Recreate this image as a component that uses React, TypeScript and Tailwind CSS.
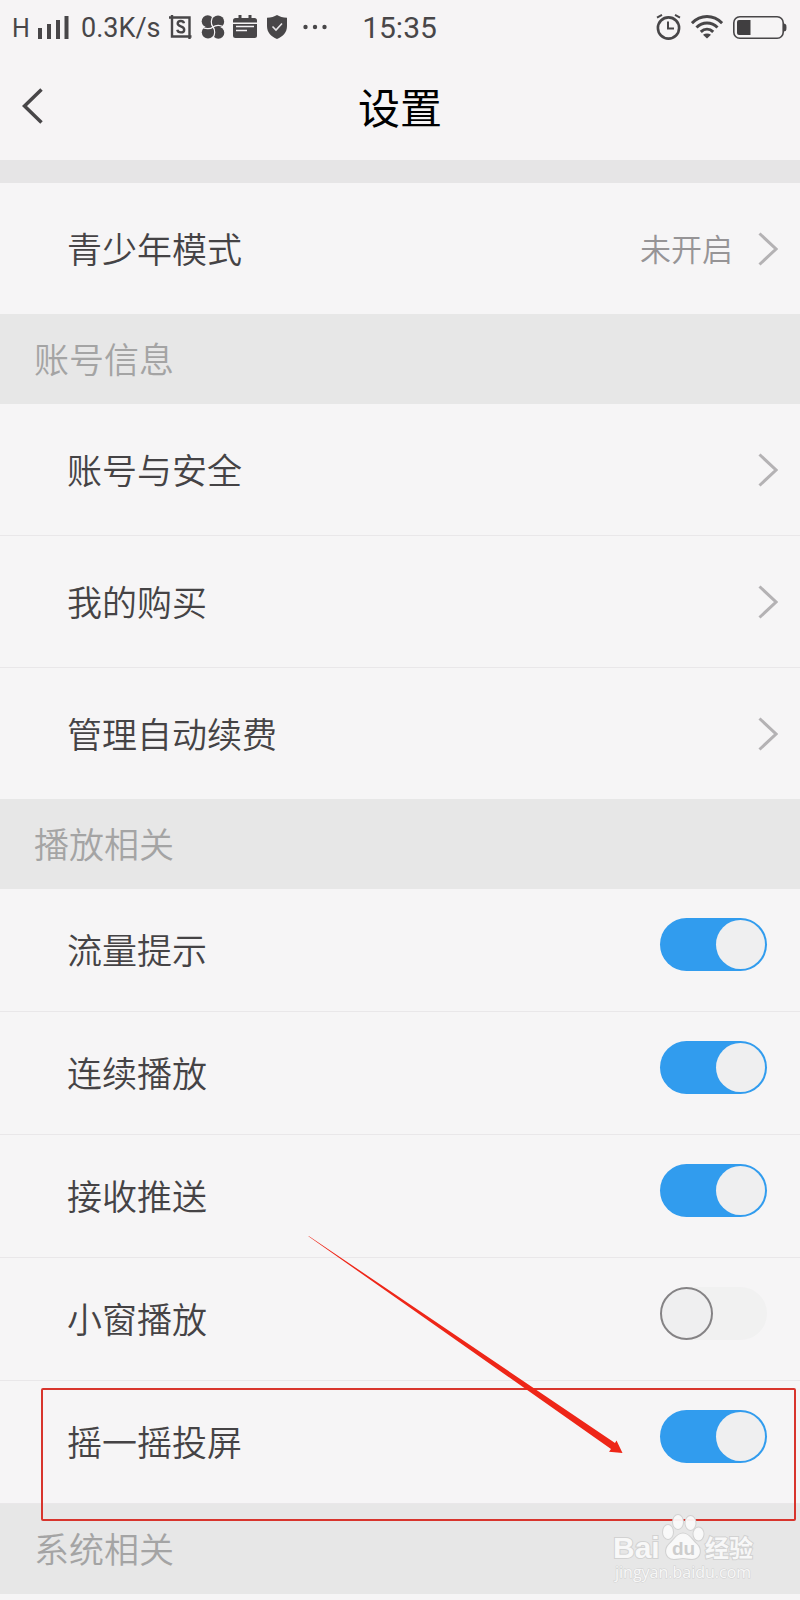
import type { ReactNode } from "react"

const sans = "font-['Roboto','Noto_Sans_CJK_SC',sans-serif]"

const accountItems = [
  { name: "账号与安全", href: "#security" },
  { name: "我的购买", href: "#purchases" },
  { name: "管理自动续费", href: "#renewal" },
]

const playbackItems = [
  { id: "traffic", name: "流量提示", on: true },
  { id: "continuous", name: "连续播放", on: true },
  { id: "push", name: "接收推送", on: true },
  { id: "mini", name: "小窗播放", on: false },
]

function ScreenshotIcon() {
  return (
    <svg width="24" height="26" viewBox="0 0 24 26" fill="none" stroke="#484648" strokeWidth="2.4">
      <path d="M0 3.5H20.500V25M3 1V22.5H22.5" />
      <path d="M15 9.2C14.6 7.6 13.4 7 11.8 7C9.9 7 8.7 8 8.7 9.6C8.7 13.2 15.2 11.6 15.2 15.7C15.2 17.4 13.8 18.4 11.9 18.4C9.9 18.4 8.6 17.5 8.3 15.8" />
    </svg>
  )
}

function PinwheelIcon() {
  return (
    <svg width="24" height="24" viewBox="0 0 24 24" fill="#484648">
      <circle cx="6.700" cy="6.300" r="6" />
      <circle cx="17" cy="6.700" r="6.200" />
      <circle cx="17.300" cy="17.700" r="6" />
      <circle cx="7" cy="17.300" r="6.200" />
      <circle cx="12" cy="12" r="6.500" />
      <g fill="none" stroke="#f5f3f5" strokeWidth="1.200">
        <path d="M12 12C9.500 9 9.800 4 12.500 0.500" />
        <path d="M12 12C15 9.500 20 9.800 23.500 12.500" />
        <path d="M12 12C14.500 15 14.200 20 11.500 23.500" />
        <path d="M12 12C9 14.500 4 14.200 0.500 11.500" />
      </g>
    </svg>
  )
}

function CalendarIcon() {
  return (
    <svg width="24" height="24" viewBox="0 0 24 24" fill="#484648">
      <path d="M5.500 0H8.500V3H15.500V0H18.500V3H21.500A2.500 2.500 0 0 1 24 5.500V7.500H0V5.500A2.500 2.500 0 0 1 2.500 3H5.500Z" />
      <path d="M0 9H24V20.500A2.500 2.500 0 0 1 21.500 23H2.500A2.500 2.500 0 0 1 0 20.500Z" />
      <path d="M3 11.500H21M3 15.500H14" stroke="#f5f3f5" strokeWidth="1.700" />
    </svg>
  )
}

function ShieldIcon() {
  return (
    <svg width="20" height="24" viewBox="0 0 20 24">
      <path d="M10 0C12.500 1.600 16 2.600 20 2.800V11C20 17.500 16 21.500 10 24C4 21.500 0 17.500 0 11V2.800C4 2.600 7.500 1.600 10 0Z" fill="#484648" />
      <path d="M5.500 11.500L9 15L15 8.500" fill="none" stroke="#e8e6e8" strokeWidth="1.600" />
    </svg>
  )
}

function SignalIcon() {
  return (
    <svg width="31" height="23" viewBox="0 0 31 23" fill="#484648">
      <path d="M0 12H4V23H0ZM9 8H13V23H9ZM18 4H22V23H18ZM26.500 0H30.500V23H26.500Z" />
    </svg>
  )
}

function AlarmIcon() {
  return (
    <svg width="25" height="26" viewBox="0 0 25 26" fill="none" stroke="#484648">
      <circle cx="12.500" cy="14" r="10.600" strokeWidth="2.600" />
      <path d="M12 7.500V14.500H18" strokeWidth="2" />
      <path d="M1 3.600L6 0.900M24 3.600L19 0.900" strokeWidth="2" />
    </svg>
  )
}

function WifiIcon() {
  return (
    <svg width="32" height="24" viewBox="0 0 32 24" fill="none" stroke="#484648" strokeWidth="3">
      <path d="M0.900 8.200C9.500 -0.700 22.500 -0.700 31.100 8.200" />
      <path d="M5.500 12.500C11.500 6.500 20.500 6.500 26.500 12.500" />
      <path d="M9.800 16.800C13.500 13.300 18.500 13.300 22.200 16.800" />
      <path d="M16 23.500L12 19.800C14.500 17.900 17.500 17.900 20 19.800Z" fill="#484648" stroke="none" />
    </svg>
  )
}

function BatteryIcon() {
  return (
    <svg width="54" height="23" viewBox="0 0 54 23">
      <rect x="0.800" y="0.800" width="49.400" height="21.400" rx="6" fill="none" stroke="#484648" strokeWidth="1.600" />
      <path d="M6 4H17.500V19H6A2 2 0 0 1 4 17V6A2 2 0 0 1 6 4Z" fill="#403e40" />
      <path d="M50.500 7.500C52.800 7.500 53.500 8.500 53.500 11.500S52.800 15.500 50.500 15.500Z" fill="#484648" />
    </svg>
  )
}

function StatusBar() {
  return (
    <div className="grid h-14 grid-cols-[1fr_auto_1fr] items-center pb-0.5 pl-3 pr-[13px] text-[#484648]">
      <div className="flex items-center">
        <span className="w-[26px] pt-1 text-[25px] leading-[30px]">H</span>
        <SignalIcon />
        <span className="ml-3 w-[88px] pt-0.5 text-[27px] leading-[30px]">0.3K/s</span>
        <div className="flex items-center gap-2">
          <ScreenshotIcon />
          <PinwheelIcon />
          <CalendarIcon />
          <div className="pl-0.5">
            <ShieldIcon />
          </div>
        </div>
        <svg className="ml-4" width="24" height="6" viewBox="0 0 24 6" fill="#484648">
          <circle cx="2.500" cy="3" r="2.200" />
          <circle cx="12" cy="3" r="2.200" />
          <circle cx="21.500" cy="3" r="2.200" />
        </svg>
      </div>
      <time className="pt-0.5 text-[30px] leading-9">15:35</time>
      <div className="flex items-center justify-end gap-[10px]">
        <AlarmIcon />
        <WifiIcon />
        <BatteryIcon />
      </div>
    </div>
  )
}

function RightArrow() {
  return (
    <svg width="20" height="34" viewBox="0 0 20 34" fill="none" stroke="#b4b2b4" strokeWidth="3">
      <path d="M1.500 1.500L18 17L1.500 32.500" />
    </svg>
  )
}

function SectionTitle({ children }: { children: ReactNode }) {
  return (
    <h2 className="flex h-[90px] items-center bg-[#e7e7e7] pl-[34px] pt-1.5 text-[35px] font-[350] leading-[52px] text-[#a4a4a4]">
      {children}
    </h2>
  )
}

function LinkRow({ name, href, value }: { name: string; href: string; value?: string }) {
  return (
    <a href={href} className="flex h-[132px] items-center border-b border-[#e9e7e9] pl-[67px] pr-[22px] last:h-[131px] last:border-b-0">
      <span className="flex-1 pt-1.5 text-[35px] font-[350] leading-[52px]">{name}</span>
      {value && <span className="mr-[25px] pt-1 text-[31px] font-[350] leading-[46px] text-[#969496]">{value}</span>}
      <RightArrow />
    </a>
  )
}

function SwitchRow({ id, name, on }: { id: string; name: string; on: boolean }) {
  return (
    <div className="flex h-[123px] items-center border-b border-[#e9e7e9] pl-[67px] pr-[33px]">
      <label htmlFor={id} className="flex-1 pt-1.5 text-[35px] font-[350] leading-[52px]">
        {name}
      </label>
      <div className="pb-3">
        <input
          id={id}
          type="checkbox"
          role="switch"
          defaultChecked={on}
          className="flex h-[53px] w-[107px] appearance-none items-center rounded-full bg-[#f1f1f1] before:block before:size-[53px] before:rounded-full before:border-2 before:border-[#858385] before:bg-[#efeff0] checked:justify-end checked:bg-[#319cee] checked:pr-[2px] checked:before:size-[49px] checked:before:border-0"
        />
      </div>
    </div>
  )
}

function Pointer() {
  return (
    <svg className="pointer-events-none absolute -top-[145px] left-[308px] z-10" width="315" height="218" viewBox="0 0 315 218">
      <path d="M0 0L1.500 0.500L307 207L308.500 204.500L314.500 217L301 215.800L303 213Z" fill="#ee2618" />
    </svg>
  )
}

function Watermark() {
  return (
    <svg className="absolute left-[612px] top-[10px] z-20 overflow-visible" width="146" height="72" viewBox="0 0 146 72" aria-label="Baidu 经验">
      <g fill="#fafafa" stroke="#d2d2d2" strokeWidth="2" fillOpacity="0.950" style={{ paintOrder: "stroke" }}>
        <ellipse cx="56" cy="18" rx="5" ry="7" />
        <ellipse cx="66" cy="8" rx="5" ry="7" />
        <ellipse cx="78.500" cy="9" rx="5" ry="7" />
        <ellipse cx="86.500" cy="20" rx="5" ry="6.500" />
        <path d="M71 19.500C77 19.500 80 26 84.500 30C90 35 89 44.500 80 45C76 45 74 44 71 44S66 45 62 45C53 44.500 52 35 57.500 30C62 26 65 19.500 71 19.500Z" />
        <text x="1" y="44" fontSize="30" fontWeight="700" fontFamily="Liberation Sans, sans-serif">Bai</text>
        <text x="93" y="43" fontSize="24" fontWeight="700" fontFamily="Noto Sans CJK SC, sans-serif">经验</text>
        <text x="3" y="64" fontSize="16" strokeWidth="1" fontFamily="Open Sans, sans-serif">jingyan.baidu.com</text>
      </g>
      <text x="60" y="41" fontSize="19" fontWeight="700" fill="#cdcdcd" fontFamily="Liberation Sans, sans-serif">du</text>
    </svg>
  )
}

export default function App() {
  return (
    <div className={`min-h-screen overflow-hidden bg-[#f6f5f6] text-[#454345] ${sans}`}>
      <div className="bg-[#f6f4f5]">
        <StatusBar />
        <header className="grid h-[104px] grid-cols-[1fr_auto_1fr] items-center pb-1 pl-[22px] pr-[22px]">
          <button type="button" aria-label="返回" className="justify-self-start">
            <svg width="21" height="36" viewBox="0 0 21 36" fill="none" stroke="#484648" strokeWidth="3.500">
              <path d="M19.500 1.500L2.500 18L19.500 34.500" />
            </svg>
          </button>
          <h1 className="pt-2 text-[42px] leading-[60px] text-black">设置</h1>
        </header>
      </div>

      <main>
        <div className="border-t-[23px] border-[#e6e5e6]">
          <LinkRow name="青少年模式" href="#teen" value="未开启" />
        </div>

        <SectionTitle>账号信息</SectionTitle>
        <div>
          {accountItems.map((item) => (
            <LinkRow key={item.name} {...item} />
          ))}
        </div>

        <SectionTitle>播放相关</SectionTitle>
        <div>
          {playbackItems.map((item) => (
            <SwitchRow key={item.id} {...item} />
          ))}
          {/* Highlighted row */}
          <div className="relative">
            <SwitchRow id="shake" name="摇一摇投屏" on />
            <div className="pointer-events-none absolute left-[41px] right-1 top-[7px] z-10 h-[133px] rounded-xs border-2 border-[#d8352d]" />
            <Pointer />
          </div>
        </div>

        <div className="relative">
          <SectionTitle>系统相关</SectionTitle>
          <Watermark />
        </div>
      </main>
    </div>
  )
}
